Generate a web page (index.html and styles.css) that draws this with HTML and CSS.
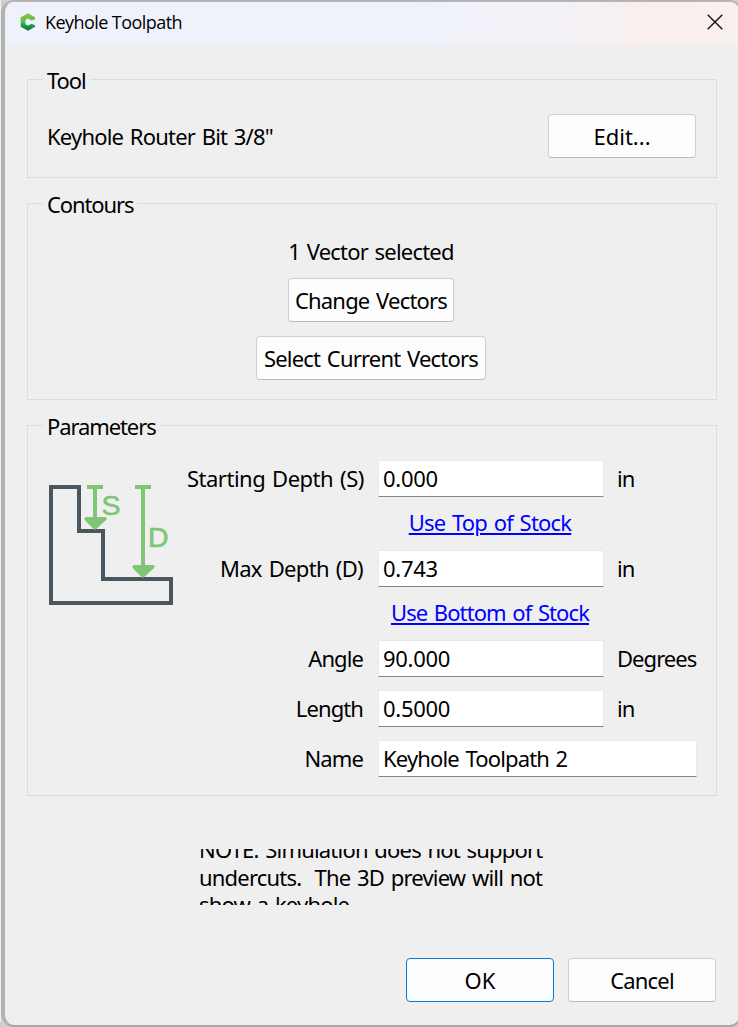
FILE: index.html
```html
<!DOCTYPE html>
<html lang="en">
<head>
<meta charset="utf-8">
<title>Keyhole Toolpath</title>
<link rel="stylesheet" href="styles.css">
</head>
<body>
<div class="backdrop"></div>
<main class="dialog">
  <header class="titlebar">
    <svg class="logo" width="16" height="18" viewBox="0 0 16 18">
      <defs><linearGradient id="lg" x1="0" y1="0" x2="0" y2="1"><stop offset="0" stop-color="#8bcb3f"/><stop offset=".5" stop-color="#5cb947"/><stop offset=".65" stop-color="#1fa056"/><stop offset="1" stop-color="#087341"/></linearGradient></defs>
      <path fill="url(#lg)" d="M8 .3 15 4.200v2L11.500 7.500 8 5.600 5.400 7v4.200L8 12.600l3.500-1.800 3.500 1.400v1.600L8 17.700.700 13.700V4.300z"/>
    </svg>
    <h1 class="title">Keyhole Toolpath</h1>
    <svg class="close" width="16" height="16" viewBox="0 0 16 16"><path d="M.7.7 15.300 15.300M15.300.7.7 15.300" fill="none" stroke="#111" stroke-width="1.4"/></svg>
  </header>
  <section class="group tool">
    <h2 class="legend">Tool</h2>
    <span class="bit">Keyhole Router Bit 3/8"</span>
    <button class="btn edit">Edit...</button>
  </section>
  <section class="group contours">
    <h2 class="legend">Contours</h2>
    <span class="count">1 Vector selected</span>
    <button class="btn change">Change Vectors</button>
    <button class="btn select">Select Current Vectors</button>
  </section>
  <section class="group params">
    <h2 class="legend">Parameters</h2>
    <svg class="diagram" width="126" height="122" viewBox="0 0 126 122">
      <path d="M3 3H31V47H55V95H123V119H3Z" fill="none" stroke="#4a555d" stroke-width="4"/>
      <g fill="#80c575">
        <path d="M39 1h16v4h-6v28h8.500l1.500 1.500-1.500 2L49.500 44 47 46l-2.500-2L37.500 37 36 34.500 38 33h7V5h-6z"/>
        <path d="M87 1h16v4h-6v76h8.500l1.500 1.500-1.500 2L97.500 92 95 94l-2.500-2L85.500 85 84 82.500 86 81h7V5h-6z"/>
        <text x="53.500" y="31" class="mark">S</text>
        <text x="100" y="63" class="mark">D</text>
      </g>
    </svg>
    <div class="form">
      <label class="start">Starting Depth (S)</label><div class="field">0.000</div><span class="unit">in</span>
      <a class="link">Use Top of Stock</a>
      <label class="max">Max Depth (D)</label><div class="field">0.743</div><span class="unit">in</span>
      <a class="link bottom">Use Bottom of Stock</a>
      <label>Angle</label><div class="field">90.000</div><span class="unit">Degrees</span>
      <label>Length</label><div class="field">0.5000</div><span class="unit">in</span>
      <label>Name</label><div class="field wide">Keyhole Toolpath 2</div>
    </div>
  </section>
  <div class="note"><p>NOTE: Simulation does not support<br>undercuts.&nbsp; The 3D preview will not<br>show a keyhole.</p></div>
  <footer class="actions">
    <button class="btn primary">OK</button>
    <button class="btn">Cancel</button>
  </footer>
</main>
</body>
</html>
```

FILE: styles.css
```css
* { box-sizing: border-box; }
body {
  margin: 0;
  width: 738px;
  height: 1027px;
  overflow: hidden;
  display: flex;
  background: #d0d0d0;
  font: 22px/30px "Noto Sans", sans-serif;
  letter-spacing: -0.8px;
  word-spacing: 1.7px;
  color: #000;
}
.backdrop {
  flex: none;
  width: 3px;
  height: 1022px;
  margin-left: -2px;
  background: #f0f0f0;
}
.dialog {
  flex: none;
  width: 741px;
  height: 1027px;
  margin-right: -4px;
  display: flex;
  flex-direction: column;
  border: 2px solid #a9a9a9;
  border-top-color: #b5b5b5;
  border-left: 4px solid #b2b2b2;
  border-radius: 13px;
  background: #efefef;
  overflow: hidden;
}
.titlebar {
  flex: none;
  height: 43px;
  display: flex;
  align-items: center;
  padding: 0 17px 3px 15px;
  background: linear-gradient(90deg, #eff2fb 0, #eff2fb 55%, #f3f1f7 75%, #f9efed 88%, #f9f1ed);
}
.title {
  margin: 0 auto 0 9px;
  font: 18px/24px "Open Sans", sans-serif;
  letter-spacing: -0.56px;
  word-spacing: 0;
}
.group {
  position: relative;
  flex: none;
  width: 690px;
  margin-left: 22px;
  border: 1px solid #dcdcdc;
}
.legend {
  position: absolute;
  top: -15px;
  left: 15px;
  margin: 0;
  padding: 0 4px;
  background: #efefef;
  font: inherit;
  letter-spacing: -1.1px;
}
.tool {
  height: 99px;
  margin-top: 34px;
  padding: 14px 20px 0 19px;
  display: flex;
  align-items: center;
  justify-content: space-between;
}
.contours {
  height: 197px;
  margin-top: 25px;
  padding: 32px 2px 0 0;
  display: flex;
  flex-direction: column;
  align-items: center;
}
.count { margin-bottom: 12px; }
.btn {
  flex: none;
  width: 148px;
  height: 44px;
  padding: 0 0 1px;
  border: 1px solid #cfcfcf;
  border-bottom-color: #b9b9b9;
  border-radius: 4px;
  background: #fdfdfd;
  color: #000;
  font: inherit;
  letter-spacing: inherit;
  word-spacing: inherit;
  white-space: nowrap;
}
.edit { padding: 1px 0 0; letter-spacing: 0; }
.change { width: 166px; margin-bottom: 14px; }
.select { width: 230px; }
.params {
  height: 371px;
  margin-top: 25px;
  padding: 34px 19px 0 20px;
  display: flex;
  justify-content: space-between;
}
.diagram { margin-top: 24px; }
.mark {
  font: 28.5px "Liberation Sans", sans-serif;
  stroke: #80c575;
  stroke-width: 0.6px;
}
.form {
  display: grid;
  grid-template-columns: 176px 226px 79px;
  grid-template-rows: 37px 53px 37px 53px 50px 50px 37px;
  align-content: start;
  column-gap: 14px;
  white-space: nowrap;
}
.form label {
  grid-column: 1;
  height: 37px;
  margin: 0 1px 0 -1px;
  line-height: 36px;
  text-align: right;
  letter-spacing: -0.9px;
}
.form .start { letter-spacing: -0.5px; }
.form .max { letter-spacing: -0.65px; }
.unit {
  height: 37px;
  margin-left: -1px;
  line-height: 36px;
  letter-spacing: -0.95px;
}
.field {
  height: 37px;
  padding-left: 4px;
  background: #fff;
  border: 1px solid #e9e9e9;
  border-bottom-color: #868686;
  line-height: 34px;
  letter-spacing: -0.3px;
}
.wide { grid-column: 2 / 4; letter-spacing: -0.85px; }
.link {
  grid-column: 2;
  justify-self: center;
  margin-right: 2px;
  line-height: 51px;
  color: #00f;
  text-decoration: underline;
  letter-spacing: -0.8px;
}
.bottom { letter-spacing: -0.9px; }
.note {
  flex: none;
  width: 360px;
  height: 56px;
  margin: 53px 0 0 194px;
  overflow: hidden;
  white-space: nowrap;
}
.note p { margin: -13px 0 0; line-height: 27.500px; }
.actions {
  display: flex;
  gap: 14px;
  margin: 53px 0 0 401px;
}
.primary { border-color: #0078d4; letter-spacing: 0; }
```
